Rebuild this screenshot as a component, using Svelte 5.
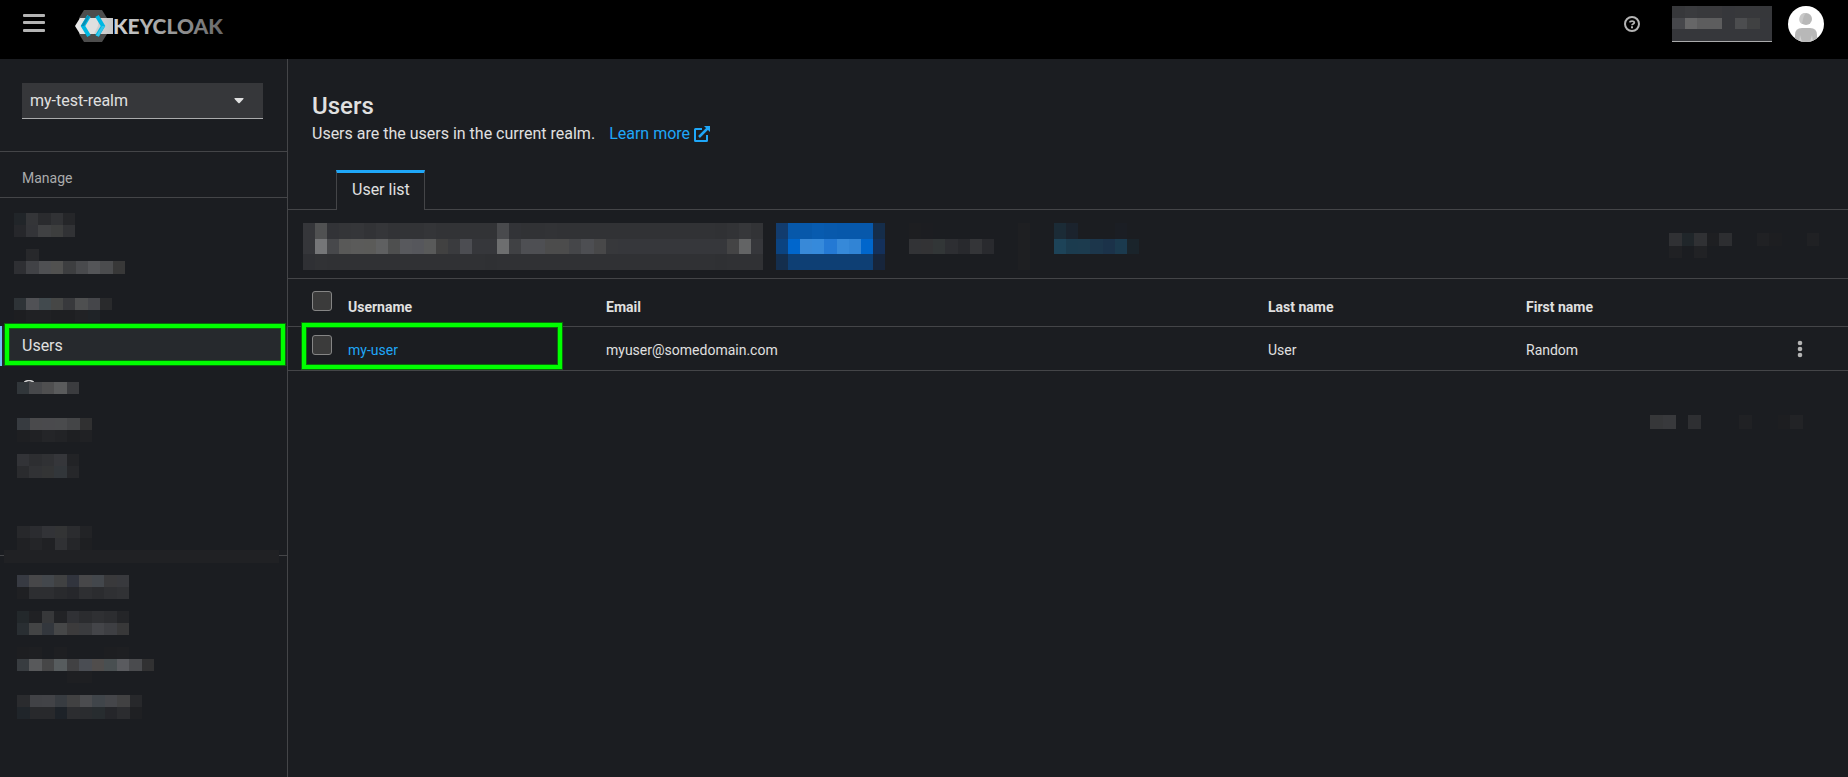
<script lang="ts">
  interface Mosaic {
    w: number
    h: number
    rows: string[]
  }

  interface User {
    username: string
    email: string
    lastName: string
    firstName: string
  }

  // One string per row, one hex colour per cell, "-" leaves the cell empty
  const navBefore: Mosaic[] = [
    { w: 61, h: 24, rows: ['212529 343538 2a2b2e 313235 252629', '26272b 333438 404143 3d3e3e 313235'] },
    { w: 111, h: 37, rows: ['- 27282b - - - - - - -', '2e2f33 414246 4f5053 515150 3d3e40 494a4d 545558 4b4c4e 383838', '-'] },
    { w: 98, h: 24, rows: ['2e3337 505155 424a4e 464746 38393c 4e4f50 45464a 292a2c', '1d1e21 202124 202124 1e1f22 1e1f22 212225 1f2327 -'] }
  ]

  const navAfter: Mosaic[] = [
    { w: 62, h: 24, rows: ['31363a 47484b 4f4f50 5a5b5c 3b3c3f', '-'] },
    { w: 75, h: 24, rows: ['373b40 4a4a4c 4a4a4d 4a4b4d 444547 303031', '1e1f22 202124 242528 222326 1e1f22 202124'] },
    { w: 62, h: 24, rows: ['323337 2d2e31 303134 35363a 222326', '2a2b2e 313235 333435 32363a 26272a'] }
  ]

  const configureTitle: Mosaic = {
    w: 75,
    h: 24,
    rows: ['27282b 2b2c30 323337 333435 2b2c2f 222326', '202124 242528 202124 303134 252629 1e1f22']
  }

  const navConfigure: Mosaic[] = [
    { w: 112, h: 24, rows: ['373a42 474749 43474c 404142 31343d 474749 43474c 39393b 38393d', '1f2023 2d2e31 2d2e31 292a2d 26272b 2e2f32 2b2c2f 2f3033 313235'] },
    { w: 112, h: 24, rows: ['23282b 202124 37383a 222326 303135 2b2c2f 2f3033 2c2d30 242528', '292e32 434445 33373d 464748 3c3b3c 3a3b3e 444549 3e3f43 383839'] },
    { w: 137, h: 36, rows: ['1d1e21 1e1f22 - 1e1f22 - - - 1d1e21 1e1f22 - -', '383c40 58595b 464647 575c5e 414143 4a4d53 504d4c 494f51 5a5b5f 4a4b4e 313132', '- - - - 1e1f22 1e1f22 - - - - -'] },
    { w: 125, h: 24, rows: ['2a2b2e 414246 424347 383c41 414142 4b4c4f 40454a 45464a 414142 27282b', '20252a 28292c 28292c 1d2228 2c2d30 2a2c2f 272c2f 25262a 2b2c2f 1f2023'] }
  ]

  const headerName: Mosaic = {
    w: 100,
    h: 35,
    rows: [
      '37383b 3a3b3e 38393c 39393c 36373b 37383b 37383b 36373a',
      '46474b 666667 5d5d5e 5d5d5e 36373b 4c4d4f 404142 36373b',
      '36373b 36373b 36373b 36373b 36373b 36373b 36373b 36373b'
    ]
  }

  const searchField: Mosaic = {
    w: 460,
    h: 47,
    rows: [
      '35363a 505152 323337 343538 353639 323336 353639 323336 323336 323336 343538 323336 323336 323336 323336 323336 494a4d 323337 313235 313235 323336 313235 313235 313235 313235 313235 313235 313235 313235 313235 313235 313235 313235 313235 303134 323336 36373a 323336',
      '35363a 757678 47484b 595958 5b5b5a 5b5b59 5f6061 4e4f4f 58595d 56575c 595a5a 414141 3a3b3e 4c4d52 36373b 36373b 6d6e6f 404144 4e4f53 4e4f53 4c4c4c 4c4c4c 454649 4d4e52 484849 37383b 36373b 36373b 36373b 36373b 36373b 36373b 36373b 36373b 36373b 444445 636465 36373b',
      '2f3034 313235 303134 303134 303134 303134 303134 303134 303134 303134 303134 303134 303134 303134 303134 2f3033 303134 303134 303134 303134 303134 303134 303134 303134 303134 303134 303134 303134 303134 303134 303134 303134 303134 303134 2f3033 303134 303134 303134'
    ]
  }

  const primaryAction: Mosaic = {
    w: 109,
    h: 47,
    rows: [
      '123c6e 0758aa 0758aa 085baf 0859ac 0758ab 0758ab 0758ab 152d4a',
      '0b4380 0066cc 3889d8 368adb 2479d4 3689d9 3184d5 0066cc 14305a',
      '142e4d 0e3f74 0e3f74 0e3f74 0e3f74 0e3f74 0e3f74 0e3f74 17253b'
    ]
  }

  const secondaryAction: Mosaic = {
    w: 85,
    h: 47,
    rows: ['1d1e21 1c1d21 - - - - -', '323336 333335 323637 2d2e32 28292d 343538 292a2e', '-']
  }

  const separator: Mosaic = { w: 12, h: 47, rows: ['1e1f22', '1e1f22', '1e1f22'] }

  const linkAction: Mosaic = {
    w: 85,
    h: 47,
    rows: ['1b2b36 1b232d - - - 1b1e24 -', '1d4358 1b3b4e 1c3b4e 1c364b 1b3249 1b3a4e 1a242b', '-']
  }

  const topPager: Mosaic = {
    w: 150,
    h: 25,
    rows: ['303134 20262a 303134 1e1f22 2d2e31 - - 202124 1d1e21 - - 202124', '202124 - 212225 - - - - - - - - -']
  }

  const bottomPager: Mosaic = {
    w: 153,
    h: 14,
    rows: ['363739 38393c - 2e2f32 - - - 202124 - - 1d1e21 222326']
  }

  const users: User[] = [
    { username: 'my-user', email: 'myuser@somedomain.com', lastName: 'User', firstName: 'Random' }
  ]
</script>

{#snippet mosaic(m: Mosaic)}
  {@const grid = m.rows.map((row) => row.split(' '))}
  <svg
    class="mosaic"
    width={m.w}
    height={m.h}
    viewBox="0 0 {grid[0].length} {grid.length}"
    preserveAspectRatio="none"
    shape-rendering="crispEdges"
    aria-hidden="true"
  >
    {#each grid as row, y}
      {#each row as color, x}
        {#if color !== '-'}
          <rect {x} {y} width="1" height="1" fill="#{color}" />
        {/if}
      {/each}
    {/each}
  </svg>
{/snippet}

<div class="page">
  <header class="masthead">
    <button class="menu-toggle" aria-label="Global navigation">
      <svg width="22" height="20" viewBox="0 0 22 20" fill="#b4b4b4" aria-hidden="true">
        <rect y="1" width="22" height="3" rx="1" />
        <rect y="8" width="22" height="3" rx="1" />
        <rect y="16" width="22" height="3" rx="1" />
      </svg>
    </button>

    <a class="brand" href="#/" aria-label="Keycloak">
      <svg width="154" height="32" viewBox="0 0 154 32">
        <defs>
          <linearGradient id="band" x1="0" x2="1">
            <stop offset="0" stop-color="#ececec" />
            <stop offset="1" stop-color="#c6c6c6" />
          </linearGradient>
          <linearGradient id="word" x1="0" x2="1">
            <stop offset="0" stop-color="#d2d2d2" />
            <stop offset="1" stop-color="#686868" />
          </linearGradient>
        </defs>
        <path d="M9 0H27L32 8V24L27 32H9L4 24V8Z" fill="#4d4d4d" />
        <path d="M5 8H38V24H5L0 16Z" fill="url(#band)" />
        <path d="M14 8H24L29 16L24 24H14L9 16Z" fill="#e0e0e0" />
        <path d="M24 8L29 16L24 24L19 24L23 16Z" fill="#cfcfcf" />
        <path d="M14 6L8 16L14 26" fill="none" stroke="#00b8e3" stroke-width="4" />
        <path d="M12 6L6 16H9L15 6Z" fill="#0a8fb3" />
        <path d="M22 6L28 16L22 26" fill="none" stroke="#00b8e3" stroke-width="4" />
        <path d="M27 16H30L24 26H21Z" fill="#33c6e9" />
        <text x="38" y="24" fill="url(#word)">KEYCLOAK</text>
      </svg>
    </a>

    <div class="tools">
      <button class="help" aria-label="Help">
        <svg width="16" height="16" viewBox="0 0 16 16" fill="none" stroke="#b4b4b4" aria-hidden="true">
          <circle cx="8" cy="8" r="7" stroke-width="2" />
          <path d="M5.7 6.4C6 4.8 10.3 4.5 10.3 6.6C10.3 8 8 7.9 8 9.2" stroke-width="1.8" />
          <rect x="7" y="10.3" width="2" height="2" fill="#b4b4b4" stroke="none" />
        </svg>
      </button>
      <button class="account" aria-label="Account menu">{@render mosaic(headerName)}</button>
      <svg class="avatar" width="36" height="36" viewBox="0 0 36 36" role="img" aria-label="Avatar">
        <clipPath id="round"><circle cx="18" cy="18" r="18" /></clipPath>
        <g clip-path="url(#round)">
          <rect width="36" height="36" fill="#fff" />
          <circle cx="18" cy="13" r="6" fill="#b8b8b8" />
          <path d="M18 7A6 6 0 0 0 14 18C15 14 15 10 18 7Z" fill="#c8c8c8" />
          <path d="M7 36V29Q7 22 14 22H22Q29 22 29 29V36Z" fill="#b8b8b8" />
          <path d="M11 36L12 29L14 36ZM22 36L24 29L25 36Z" fill="#d2d2d2" />
        </g>
      </svg>
    </div>
  </header>

  <div class="body">
    <nav class="sidebar" aria-label="Global">
      <div class="realm">
        <button class="realm-select">
          <span>my-test-realm</span>
          <svg width="10" height="6" viewBox="0 0 10 6" aria-hidden="true"><path d="M1 0H9Q10 0 9.400 1L5.700 5Q5 5.700 4.300 5L0.600 1Q0 0 1 0Z" fill="#e0e0e0" /></svg>
        </button>
      </div>

      <h2 class="section-title">Manage</h2>
      <ul class="nav-list">
        {#each navBefore as item}
          <li>{@render mosaic(item)}</li>
        {/each}
      </ul>
      <a class="nav-link current" href="#/users" aria-current="page">
        Users
        <span class="marker nav-marker"></span>
      </a>
      <ul class="nav-list after">
        {#each navAfter as item, i}
          <li>
            {#if i === 0}
              <svg class="letter-top" width="10" height="2" viewBox="0 0 10 2" aria-hidden="true"><path d="M0 2.500Q5 -1.500 10 2.500" fill="none" stroke="#d0d0d0" stroke-width="1.500" /></svg>
            {/if}
            {@render mosaic(item)}
          </li>
        {/each}
      </ul>

      <div class="configure">{@render mosaic(configureTitle)}</div>
      <div class="divider"><span></span></div>
      <ul class="nav-list configure-list">
        {#each navConfigure as item}
          <li>{@render mosaic(item)}</li>
        {/each}
      </ul>
    </nav>

    <main>
      <section class="intro">
        <h1>Users</h1>
        <p>
          Users are the users in the current realm.
          <a class="learn-more" href="#/help">
            Learn more
            <svg width="16" height="16" viewBox="0 0 16 16" aria-hidden="true">
              <path d="M8 3H1.500Q1 3 1 3.500V14.500Q1 15 1.500 15H12.500Q13 15 13 14.500V9" fill="none" stroke="#1fa7f8" stroke-width="2" />
              <path d="M5 11L14 2" stroke="#1fa7f8" stroke-width="2.500" />
              <path d="M10 0H16V6Z" fill="#1fa7f8" />
            </svg>
          </a>
        </p>
      </section>

      <div class="tabs" role="tablist">
        <button class="tab" role="tab" aria-selected="true">User list</button>
      </div>

      <div class="toolbar">
        {@render mosaic(searchField)}
        <button class="action first" aria-label="Add user">{@render mosaic(primaryAction)}</button>
        <button class="action" aria-label="Delete user">{@render mosaic(secondaryAction)}</button>
        {@render mosaic(separator)}
        <button class="action" aria-label="Refresh">{@render mosaic(linkAction)}</button>
        <div class="pager">{@render mosaic(topPager)}</div>
      </div>

      <table>
        <colgroup>
          <col class="col-check" />
          <col class="col-name" />
          <col />
          <col class="col-name" />
          <col class="col-name" />
          <col class="col-actions" />
        </colgroup>
        <thead>
          <tr>
            <th class="check"><input type="checkbox" aria-label="Select all rows" /></th>
            <th>Username</th>
            <th>Email</th>
            <th>Last name</th>
            <th>First name</th>
            <th></th>
          </tr>
        </thead>
        <tbody>
          {#each users as user (user.username)}
            <tr>
              <td class="check">
                <input type="checkbox" aria-label="Select {user.username}" />
                <span class="marker row-marker"></span>
              </td>
              <td><a href="#/users/{user.username}">{user.username}</a></td>
              <td>{user.email}</td>
              <td>{user.lastName}</td>
              <td>{user.firstName}</td>
              <td class="actions">
                <button class="kebab" aria-label="Actions">
                  <svg width="6" height="18" viewBox="0 0 6 18" fill="#b4b4b4" aria-hidden="true">
                    <circle cx="3" cy="3" r="2.300" />
                    <circle cx="3" cy="9" r="2.300" />
                    <circle cx="3" cy="15" r="2.300" />
                  </svg>
                </button>
              </td>
            </tr>
          {/each}
        </tbody>
      </table>

      <div class="bottom-pager">{@render mosaic(bottomPager)}</div>
    </main>
  </div>
</div>

<style>
  :global(body) {
    margin: 0;
    background: #1b1d21;
  }

  .page {
    display: flex;
    flex-direction: column;
    min-height: 100vh;
    background: #1b1d21;
    color: #e0e0e0;
    font-family: Roboto, 'Liberation Sans', sans-serif;
    font-size: 16px;
    line-height: 24px;
  }

  button {
    padding: 0;
    border: 0;
    background: none;
    color: inherit;
    font: inherit;
    cursor: pointer;
  }

  a {
    color: #1fa7f8;
    text-decoration: none;
  }

  svg {
    display: block;
    flex-shrink: 0;
  }

  .masthead {
    display: flex;
    align-items: flex-start;
    height: 59px;
    background: #000;
  }

  .menu-toggle {
    margin: 13px 0 0 23px;
  }

  .brand {
    margin: 10px 0 0 30px;
  }

  .brand text {
    font-family: Lato, sans-serif;
    font-size: 21px;
    font-weight: 900;
  }

  .tools {
    display: flex;
    align-items: center;
    margin: 6px 24px 0 auto;
  }

  .help {
    margin-right: 32px;
  }

  .account {
    border-bottom: 1px solid #aaabac;
    margin-right: 16px;
  }

  .body {
    display: flex;
    flex: 1;
  }

  .sidebar {
    flex: 0 0 287px;
    border-right: 1px solid #444548;
  }

  .realm {
    padding: 24px 24px 32px 22px;
    border-bottom: 1px solid #444548;
  }

  .realm-select {
    display: flex;
    align-items: center;
    justify-content: space-between;
    width: 100%;
    height: 36px;
    padding: 0 19px 0 8px;
    background: #36373a;
    border-bottom: 1px solid #aaabac;
  }

  .section-title {
    margin: 0;
    padding: 16px 22px 8px;
    border-bottom: 1px solid #444548;
    color: #aaabac;
    font-size: 14px;
    font-weight: 400;
    line-height: 21px;
  }

  .nav-list {
    display: flex;
    flex-direction: column;
    gap: 12px;
    margin: 0;
    padding: 15px 14px 4px;
    list-style: none;
  }

  .nav-list.after {
    padding: 16px 17px 48px;
  }

  .nav-list li {
    position: relative;
  }

  .nav-list.configure-list {
    padding: 12px 17px;
  }

  .letter-top {
    position: absolute;
    left: 7px;
    bottom: 100%;
  }

  .nav-link {
    position: relative;
    display: block;
    padding: 8px 20px;
    color: #e0e0e0;
  }

  .nav-link.current {
    background: #26292d;
    border-left: 2px solid #73bcf7;
  }

  .marker {
    position: absolute;
    box-sizing: border-box;
    border: 5px solid #00ff00;
    outline: 1px solid #0b6a0c;
    outline-offset: -1px;
    box-shadow: inset 0 0 0 1px #0b6a0c;
    pointer-events: none;
  }

  .nav-marker {
    inset: -3px 1px 0 2px;
  }

  .row-marker {
    top: -5px;
    left: 13px;
    width: 262px;
    height: 48px;
  }

  .configure {
    padding-left: 17px;
  }

  .divider {
    display: flex;
    flex-direction: column;
    justify-content: center;
    height: 13px;
    padding: 0 8px 0 4px;
    background: linear-gradient(#444548, #444548) 0 5px / 100% 1px no-repeat;
  }

  .divider span {
    height: 13px;
    background: #202124;
  }

  main {
    flex: 1;
    min-width: 0;
  }

  .intro {
    padding: 32px 24px 24px;
  }

  h1 {
    margin: 0;
    font-size: 24px;
    font-weight: 500;
    line-height: 31px;
  }

  p {
    display: flex;
    gap: 14px;
    margin: 0;
  }

  .learn-more {
    display: flex;
    align-items: center;
    gap: 4px;
  }

  .tabs {
    display: flex;
    height: 40px;
    padding-left: 48px;
    box-shadow: inset 0 -1px #444548;
  }

  .tab {
    padding: 3px 14px 6px 15px;
    background: #1b1d21;
    border: 1px solid #444548;
    border-top: 3px solid #1fa7f8;
    border-bottom: 0;
  }

  .toolbar {
    display: flex;
    align-items: center;
    padding: 13px 29px 8px 15px;
    border-bottom: 1px solid #444548;
  }

  .action {
    margin-right: 24px;
  }

  .action.first {
    margin-left: 13px;
  }

  .toolbar > .mosaic + .action:not(.first) {
    margin-left: 24px;
  }

  .pager {
    margin-left: auto;
    padding-bottom: 2px;
  }

  table {
    width: 100%;
    table-layout: fixed;
    border-collapse: separate;
    border-spacing: 0;
    font-size: 14px;
    line-height: 21px;
  }

  .col-check {
    width: 44px;
  }

  .col-name {
    width: 258px;
  }

  .col-actions {
    width: 80px;
  }

  th,
  td {
    border-bottom: 1px solid #444548;
    text-align: left;
    vertical-align: top;
  }

  th {
    padding: 18px 16px 8px;
    font-weight: 700;
  }

  td {
    padding: 13px 16px 9px;
  }

  .check {
    position: relative;
    padding: 12px 0 0 24px;
  }

  td.check {
    padding-top: 8px;
  }

  input[type='checkbox'] {
    display: block;
    box-sizing: border-box;
    width: 20px;
    height: 20px;
    margin: 0;
    appearance: none;
    background: #3b3b3b;
    border: 1px solid #858585;
    border-radius: 3px;
  }

  .actions {
    padding-right: 32px;
  }

  .kebab {
    display: block;
    margin: 0 auto;
  }

  .bottom-pager {
    display: flex;
    justify-content: flex-end;
    padding: 44px 45px 0 0;
  }
</style>
